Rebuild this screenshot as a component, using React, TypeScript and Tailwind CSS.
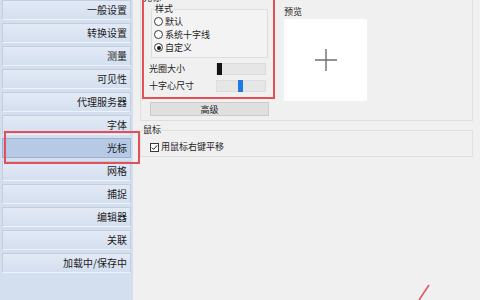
import clsx from "clsx";

const navItems = [
  "一般设置",
  "转换设置",
  "测量",
  "可见性",
  "代理服务器",
  "字体",
  "光标",
  "网格",
  "捕捉",
  "编辑器",
  "关联",
  "加载中/保存中",
];

const active = "光标";

function Radio({ label, checked }: { label: string; checked?: boolean }) {
  return (
    <div className="flex h-[13px] items-center gap-[2px]">
      <span className="flex h-[9px] w-[9px] items-center justify-center rounded-full border border-[#3a3a3a] bg-white">
        {checked && <span className="h-[4px] w-[4px] rounded-full bg-[#1a1a1a]" />}
      </span>
      <span>{label}</span>
    </div>
  );
}

function Slider({ label, pos, thumb }: { label: string; pos: number; thumb: string }) {
  return (
    <div className="flex h-[12px] items-center pl-[6px]">
      <span className="w-[67px]">{label}</span>
      <div className="relative h-[12px] w-[50px] border border-[#dcdcdc] bg-[#e6e6e6]">
        {/* thumb sits over the track */}
        <span className={clsx("absolute -top-px h-[12px] w-[5px]", thumb)} style={{ left: pos }} />
      </div>
    </div>
  );
}

export default function App() {
  return (
    <div className="relative flex h-[300px] w-[480px] overflow-hidden bg-[#f0f0f0] font-['Noto_Sans_CJK_SC','Noto_Sans',sans-serif] text-[#1c1c1c]">
      <aside className="flex w-[133px] shrink-0 flex-col gap-[3px] bg-[#d3deef] px-[2px]">
        {navItems.map((label) => (
          <div
            key={label}
            className={clsx(
              "flex h-[20px] shrink-0 items-center justify-end border pr-[3px] text-[10px] leading-none",
              label === active
                ? "border-[#9db2d2] bg-[#b6c9e5]"
                : "border-[#c2cddd] border-b-[#eef2f9] bg-linear-to-b from-[#e3eaf6] to-[#d4dfef]"
            )}
          >
            {label}
          </div>
        ))}
      </aside>

      <main className="-mt-[7px] flex flex-1 flex-col px-[7px] text-[9px]">
        <fieldset className="border border-[#dfdfdf] px-[2px] pb-[4px]">
          <legend className="leading-[10px]">光标</legend>
          <div className="flex">
            <div className="flex w-[132px] flex-col">
              <fieldset className="mt-[1px] ml-[8px] w-[117px] border border-[#dedede] bg-[#f3f3f3] px-[2px] pt-[1px] pb-[3px]">
                <legend className="ml-[1px] leading-[10px]">样式</legend>
                <Radio label="默认" />
                <Radio label="系统十字线" />
                <Radio label="自定义" checked />
              </fieldset>
              <div className="mt-[5px]">
                <Slider label="光圈大小" pos={0} thumb="bg-[#141414]" />
              </div>
              <div className="mt-[5px]">
                <Slider label="十字心尺寸" pos={21} thumb="bg-[#1d7ae2]" />
              </div>
              <button className="mt-[10px] ml-[7px] h-[14px] w-[119px] border border-[#cccccc] bg-[#dfdfdf] text-[9px] leading-none">
                高级
              </button>
            </div>
            <div className="ml-[9px] flex flex-col">
              <span className="mt-[4px] leading-[10px]">预览</span>
              <div className="mt-[2px] flex h-[82px] w-[83px] items-center justify-center bg-white">
                <svg width="24" height="24" viewBox="0 0 24 24">
                  <path d="M12 1v22M1 12h22" stroke="#6e6e6e" strokeWidth="1.4" />
                </svg>
              </div>
            </div>
          </div>
        </fieldset>

        <fieldset className="mt-[4px] border border-[#e0e0e0] px-[2px] pb-[4px]">
          <legend className="leading-[10px]">鼠标</legend>
          <div className="mt-[7px] ml-[7px] flex h-[10px] items-center gap-[2px]">
            <span className="flex h-[9px] w-[9px] items-center justify-center border border-[#3a3a3a] bg-white">
              <svg width="7" height="7" viewBox="0 0 7 7">
                <path d="M0.8 3.6l1.8 1.8 3.6-4" fill="none" stroke="#1a1a1a" strokeWidth="1" />
              </svg>
            </span>
            <span>用鼠标右键平移</span>
          </div>
        </fieldset>
      </main>

      {/* red annotation marks drawn over the screenshot */}
      <div className="pointer-events-none absolute top-[-5px] left-[142px] h-[104px] w-[133px] border-2 border-[#e2505a]" />
      <div className="pointer-events-none absolute top-[131px] left-[4px] h-[33px] w-[136px] border-2 border-[#e2505a]" />
      <svg className="pointer-events-none absolute top-[280px] left-[410px]" width="30" height="20" viewBox="0 0 30 20">
        <path d="M19 5 L9 20" stroke="#e25563" strokeWidth="1.6" fill="none" />
      </svg>
    </div>
  );
}
